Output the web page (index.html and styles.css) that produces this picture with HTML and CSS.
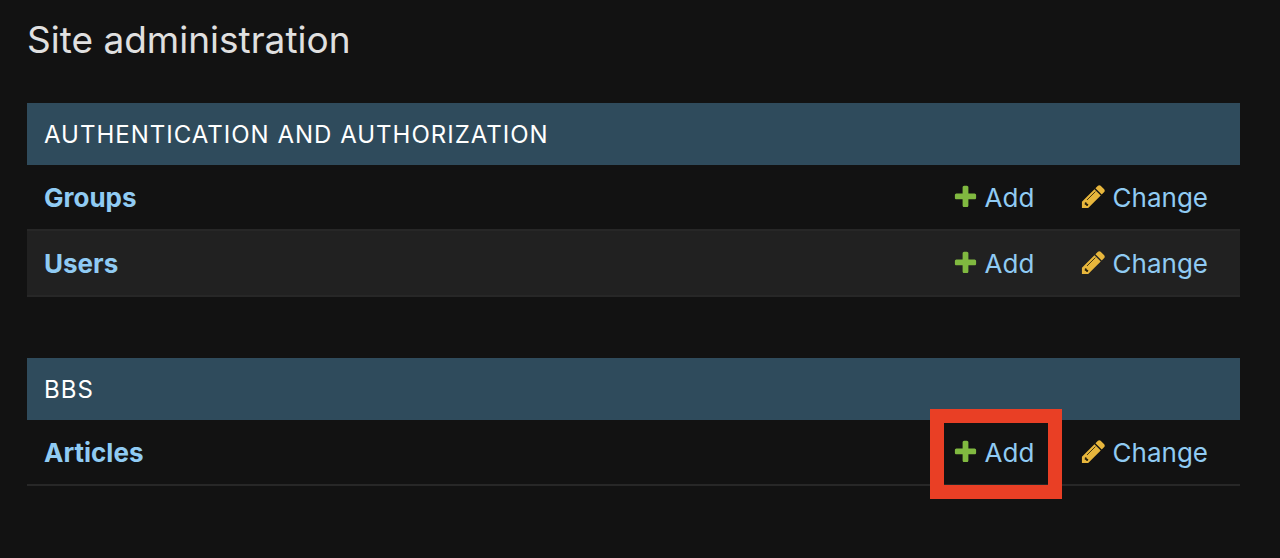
FILE: index.html
```
<!DOCTYPE html>
<html lang="en">
<head>
    <meta charset="UTF-8">
    <meta name="viewport" content="width=device-width, initial-scale=1.0">
    <title>Site administration</title>
    <link rel="stylesheet" href="styles.css">
</head>
<body>
    <svg class="sprite" aria-hidden="true">
        <symbol id="icon-add" viewBox="0 0 1792 1792">
            <path fill="#80b940" d="M1600 796v192q0 40-28 68t-68 28h-416v416q0 40-28 68t-68 28h-192q-40 0-68-28t-28-68v-416h-416q-40 0-68-28t-28-68v-192q0-40 28-68t68-28h416v-416q0-40 28-68t68-28h192q40 0 68 28t28 68v416h416q40 0 68 28t28 68z"/>
        </symbol>
        <symbol id="icon-change" viewBox="0 0 1792 1792">
            <path fill="#e7b63c" d="M960 416l416 416-832 832h-416v-416zm683 96q0 53-37 90l-166 166-416-416 166-165q36-38 90-38 53 0 91 38l235 234q37 39 37 91z"/>
            <path fill="none" stroke="#3a300f" stroke-width="64" stroke-linecap="round" d="M480 1110l520-520"/>
            <path fill="#2a220c" d="M330 1280l100 20 30 80 90 20-20 110-90 20-50-70-80-30z"/>
        </symbol>
    </svg>

    <main class="content">
        <h1>Site administration</h1>

        <table class="module">
            <caption>Authentication and Authorization</caption>
            <tr>
                <th scope="row"><a href="#">Groups</a></th>
                <td class="add"><a href="#"><svg class="icon"><use href="#icon-add"/></svg>Add</a></td>
                <td class="change"><a href="#"><svg class="icon"><use href="#icon-change"/></svg>Change</a></td>
            </tr>
            <tr>
                <th scope="row"><a href="#">Users</a></th>
                <td class="add"><a href="#"><svg class="icon"><use href="#icon-add"/></svg>Add</a></td>
                <td class="change"><a href="#"><svg class="icon"><use href="#icon-change"/></svg>Change</a></td>
            </tr>
        </table>

        <table class="module">
            <caption>BBS</caption>
            <tr>
                <th scope="row"><a href="#">Articles</a></th>
                <td class="add"><a class="marked" href="#"><svg class="icon"><use href="#icon-add"/></svg>Add</a></td>
                <td class="change"><a href="#"><svg class="icon"><use href="#icon-change"/></svg>Change</a></td>
            </tr>
        </table>
    </main>
</body>
</html>
```

FILE: styles.css
```
body {
    margin: 0;
    background-color: #121212;
    color: #eee;
    font-family: Inter, Roboto, sans-serif;
    font-size: 26px;
}
.sprite {
    display: none;
}
.content {
    padding: 16px 40px 0 27px;
}
h1 {
    margin: 0 0 39px;
    font-size: 37px;
    font-weight: 400;
    line-height: 48px;
    color: #e0e0e0;
}
.module {
    width: 100%;
    margin-bottom: 61px;
    border-spacing: 0;
}
.module caption {
    padding: 17px 17px 15px;
    background-color: #2f4b5c;
    color: #fff;
    font-size: 24px;
    line-height: 30px;
    letter-spacing: 1px;
    text-align: left;
    text-transform: uppercase;
}
.module th,
.module td {
    padding: 17px 16px 15px;
    border-bottom: 2px solid #272727;
    line-height: 32px;
    text-align: left;
}
.module th {
    padding-left: 17px;
}
.module tr:nth-child(even) {
    background-color: #212121;
}
.module .add {
    width: 96px;
}
.module .change {
    width: 126px;
    padding-right: 32px;
}
a {
    position: relative;
    display: inline-flex;
    align-items: center;
    vertical-align: top;
    color: #90cbf3;
    text-decoration: none;
}
.icon {
    width: 27px;
    height: 27px;
    margin: 0 6px 3px 0;
}
/* highlight frame around the link */
.marked::before {
    content: "";
    position: absolute;
    inset: -28px -28px -30px -22px;
    border: 14px solid #e93f25;
}
```
